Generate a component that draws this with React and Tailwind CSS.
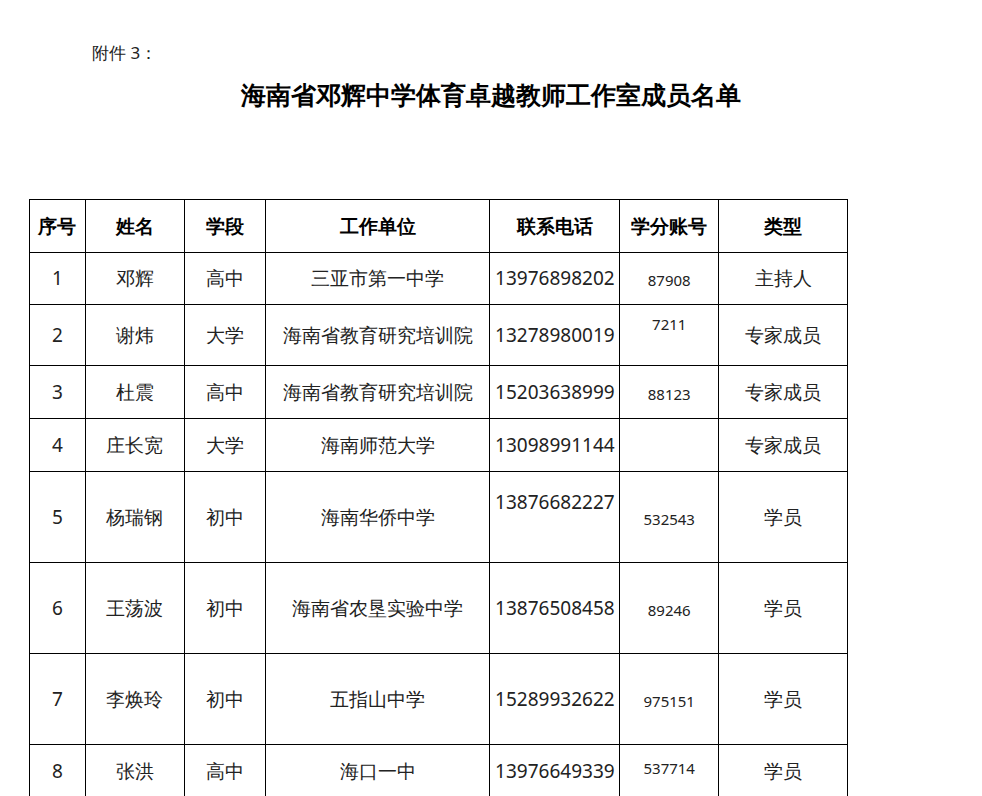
const cols = ["w-[56px]","w-[99px]","w-[81px]","w-[225px]","w-[130px]","w-[99px]","w-[128px]"];
const rows = [
  { h: "h-[52px]", d: ["1","邓辉","高中","三亚市第一中学","13976898202",["87908","pt-1"],"主持人"] },
  { h: "h-[61px]", d: ["2","谢炜","大学","海南省教育研究培训院","13278980019",["7211","self-start pt-2"],"专家成员"] },
  { h: "h-[53px]", d: ["3","杜震","高中","海南省教育研究培训院","15203638999",["88123","pt-1"],"专家成员"] },
  { h: "h-[53px]", d: ["4","庄长宽","大学","海南师范大学","13098991144",["",""],"专家成员"] },
  { h: "h-[91px]", d: ["5","杨瑞钢","初中","海南华侨中学",["13876682227","self-start pt-4"],["532543","pt-1"],"学员"] },
  { h: "h-[91px]", d: ["6","王荡波","初中","海南省农垦实验中学","13876508458",["89246","pt-1"],"学员"] },
  { h: "h-[91px]", d: ["7","李焕玲","初中","五指山中学","15289932622",["975151","pt-1"],"学员"] },
  { h: "h-[91px]", last: true, d: ["8","张洪","高中","海口一中","13976649339",["537714","pt-1"],"学员"] },
];
export default function App() {
  return (
    <div className="w-[982px] h-[796px] overflow-hidden bg-white font-['Liberation_Serif','Noto_Sans_CJK_SC',serif]">
      <div className="pt-[40px] pl-[92px] text-[17px] text-[#222]">附件 3：</div>
      <div className="mt-[10px] text-center text-[25px] font-bold text-black font-['Noto_Sans_CJK_SC',sans-serif]">海南省邓辉中学体育卓越教师工作室成员名单</div>
      <div className="mt-[86px] ml-[29px] w-[819px] border border-black">
        <div className="flex h-[53px] border-b border-black">
          {["序号","姓名","学段","工作单位","联系电话","学分账号","类型"].map((t,i)=>(
            <div key={i} className={`flex items-center justify-center text-[19px] font-bold text-black font-['Noto_Sans_CJK_SC',sans-serif] ${cols[i]} ${i<6?"border-r border-black":""}`}>{t}</div>
          ))}
        </div>
        {rows.map((r,ri)=>(
          <div key={ri} className={`flex border-b border-black ${r.h}`}>
            {r.d.map((c,i)=>{
              const [txt, cls] = Array.isArray(c) ? c : [c, ""];
              const small = i===5;
              return (
                <div key={i} className={`flex justify-center text-[#222] ${r.last?"items-start pt-[12px]":"items-center"} ${small?"text-[15px]":"text-[19px]"} ${cols[i]} ${i<6?"border-r border-black":""}`}>
                  <span className={r.last ? "" : cls}>{txt}</span>
                </div>
              );
            })}
          </div>
        ))}
      </div>
    </div>
  );
}
